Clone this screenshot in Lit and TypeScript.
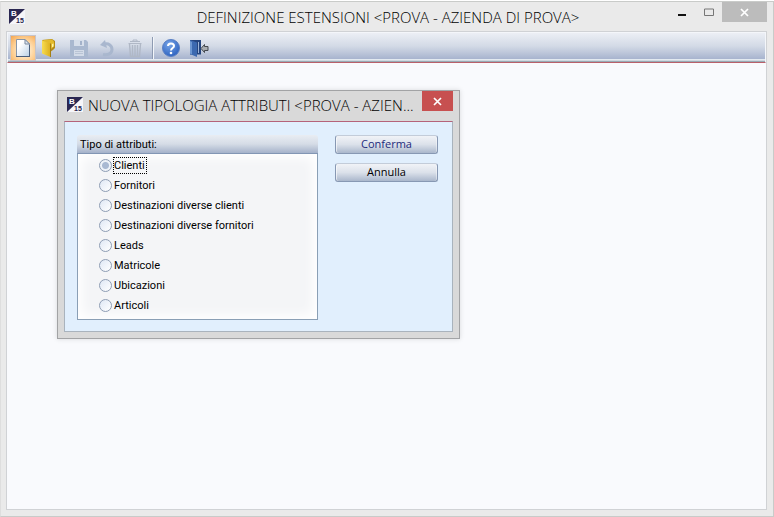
import { LitElement, html, svg, css } from "lit";
import { customElement, property, state } from "lit/decorators.js";

@customElement("app-logo")
class AppLogo extends LitElement {
  static styles = css`
    :host { display: block; width: 16px; height: 16px; }
    svg { display: block; }
    .letter { font: bold 8px "Liberation Sans", Arial, sans-serif; fill: #fff; }
    .number { font: bold 7px "Liberation Sans", Arial, sans-serif; fill: #26244c; }
  `;
  render() {
    return html`<svg width="16" height="16" viewBox="0 0 16 16" aria-hidden="true">
      <rect width="16" height="15" fill="#f6f6fa" />
      <path d="M0 0H16L0 15Z" fill="#2a2752" />
      <text class="letter" x="2" y="7">B</text>
      <text class="number" x="7" y="14">15</text>
    </svg>`;
  }
}

const icons: Record<string, unknown> = {
  new: svg`
    <defs><linearGradient id="pg" x1="0" y1="0" x2="1" y2="1"><stop offset="0.3" stop-color="#fff"/><stop offset="1" stop-color="#b9d0e6"/></linearGradient></defs>
    <path d="M3.5 1.5H12L16.5 6V18.5H3.5Z" fill="url(#pg)" stroke="#8795a8"/>
    <path d="M12 1.5V6H16.5Z" fill="#dfe8f2" stroke="#7b899e" stroke-linejoin="round"/>
    <path d="M3 18.5H17M16.5 7V18" stroke="#4a5e7b"/>`,
  open: svg`
    <defs><linearGradient id="fg" x1="0" y1="0" x2="1" y2="0"><stop offset="0" stop-color="#f7dc50"/><stop offset="1" stop-color="#dcae1c"/></linearGradient></defs>
    <path d="M1 2L11 1L14 3V10L12 12L9 14Z" fill="#b48c18"/>
    <path d="M2 2L11 1.500L13 3.500V8L9 12Z" fill="#e3bb2c"/>
    <path d="M1 2.500L9.500 5.500V19L1 15.500Z" fill="url(#fg)"/>
    <path d="M9.500 5.500V19" stroke="#a57f14"/>
    <path d="M11 6L12.500 5.500V8.500L11 9.500Z" fill="#fff3a3"/>`,
  save: svg`
    <path d="M1 2H17L19 4V19H1Z" fill="#a9b8cf"/>
    <rect x="5" y="2" width="10" height="6" fill="#d6deea"/>
    <rect x="11" y="3" width="2" height="4" fill="#a3b2ca"/>
    <rect x="5" y="12" width="10" height="6" fill="#d3dbe8"/>
    <path d="M6 13.500H14M6 15.500H14" stroke="#b9c4d5"/>`,
  undo: svg`
    <path d="M7 6.500C11 4.500 15 7.500 15 11.500C15 15.500 11 17.500 6 16.500" fill="none" stroke="#a9b7ce" stroke-width="3"/>
    <path d="M3 7L8 2L10 10Z" fill="#a9b7ce"/>`,
  trash: svg`
    <g fill="none" stroke="#b0b8c6">
    <path d="M3.500 5.500H16.500M5 3.500H15M8 3.500V2H12V3.500"/>
    <path d="M4.500 6L5.500 18.500H14.500L15.500 6M7.500 7V18M10 7V18M12.500 7V18" stroke-width="1.400"/></g>`,
  help: svg`
    <defs><radialGradient id="hg" cx=".4" cy=".3" r=".8"><stop offset="0" stop-color="#78a5e8"/><stop offset="1" stop-color="#245abb"/></radialGradient></defs>
    <circle cx="10" cy="10" r="8.500" fill="url(#hg)" stroke="#5b80c4"/>
    <path d="M7 8C7 4.500 13 4.500 13 8C13 10 10 10 10 12.500" fill="none" stroke="#fff" stroke-width="2"/>
    <circle cx="10" cy="15" r="1.300" fill="#fff"/>`,
  exit: svg`
    <path d="M1 2H12V16.500H1Z" fill="#25457f"/>
    <rect x="9" y="4" width="1" height="11" fill="#9db3d6"/>
    <path d="M1 2L8 4.500V19L1 16Z" fill="#3c69b0"/>
    <path d="M1 3L3 4V16.500L1 15.500Z" fill="#6d97d2"/>
    <path d="M12 10.500L15.500 6.500V8.500H19V12.500H15.500V14.500Z" fill="#a9adb1" stroke="#44494f"/>`,
};

@customElement("tool-button")
class ToolButton extends LitElement {
  @property() icon = "new";
  @property() label = "";
  @property({ type: Boolean }) active = false;
  @property({ type: Boolean }) disabled = false;
  static styles = css`
    button {
      display: grid; place-items: center; box-sizing: border-box;
      width: 26px; height: 26px; margin: 0; padding: 0;
      border: 1px solid transparent; background: none;
    }
    .active {
      border-color: #c6c4ca;
      background: radial-gradient(circle at 55% 60%, #fff0d6 15%, #fdce91 60%, #f4a54f);
    }
    svg { display: block; }
  `;
  render() {
    return html`<button class=${this.active ? "active" : ""} ?disabled=${this.disabled} aria-label=${this.label}>
      <svg width="20" height="20" viewBox="0 0 20 20">${icons[this.icon]}</svg>
    </button>`;
  }
}

@customElement("attribute-dialog")
class AttributeDialog extends LitElement {
  @state() selected = "Clienti";
  private kinds = ["Clienti", "Fornitori", "Destinazioni diverse clienti", "Destinazioni diverse fornitori", "Leads", "Matricole", "Ubicazioni", "Articoli"];

  static styles = css`
    :host {
      display: block; box-sizing: border-box; width: 403px; max-width: 100%;
      padding: 0 6px 6px; border: 1px solid #a2a3a5; background: #d9d9d9;
      box-shadow: 0 0 5px #0002;
      font: 11px/14px Roboto, Tahoma, sans-serif; color: #000;
    }
    header { display: flex; align-items: center; box-sizing: border-box; height: 30px; padding: 0 0 2px 3px; }
    h2 {
      flex: 1; min-width: 0; margin: 0 0 0 5px; white-space: nowrap;
      font: 300 15px/20px "Open Sans", "Segoe UI", sans-serif; color: #000;
    }
    .close {
      display: grid; place-items: center; align-self: flex-start;
      width: 31px; height: 20px; padding: 0; border: 0; background: #c75050;
    }
    .client {
      display: flex; align-items: flex-start; gap: 17px;
      padding: 13px 14px 11px 12px; border: 1px solid #a9b3bd; border-top-color: #b5637a; background: #e1effd;
    }
    fieldset { flex: 1; min-width: 0; margin: 0; padding: 0; border: 0; }
    legend {
      float: left; box-sizing: border-box; width: 100%; height: 19px; padding: 0 3px; line-height: 20px;
      border-bottom: 1px solid #8296b4; border-radius: 3px 3px 0 0;
      background: linear-gradient(#e9edf3, #d5dce6 50%, #a5b2ca);
    }
    .choices {
      clear: both; display: flex; flex-direction: column; padding: 1px 0 4px 21px;
      border: 1px solid #8a9fb5; border-top: 0;
      background: #f4f5f7; box-shadow: inset 0 0 12px 4px #fff;
    }
    .choice { display: flex; align-items: center; gap: 1px; height: 20px; }
    .choice span { padding: 1px 1px 0 0; border: 1px solid transparent; }
    .choice .focus { border: 1px dotted #000; }
    input {
      appearance: none; box-sizing: border-box; width: 13px; height: 13px; margin: 0;
      border: 1px solid #8e9db4; border-radius: 50%;
      background: linear-gradient(135deg, #dfe8f5, #fff);
    }
    input:checked { background: radial-gradient(circle, #a9b9d2 0 3px, #eef2f8 4px); }
    .actions { display: flex; flex-direction: column; gap: 9px; width: 103px; }
    .action {
      height: 19px; padding: 0 0 2px; font: 11px/14px "Open Sans", "Segoe UI", sans-serif; color: #000;
      border: 1px solid #8798b3; border-top-color: #c3ccd9; border-radius: 3px;
      background: linear-gradient(#f1f3f7, #dbe1ea 50%, #aab7cc);
      box-shadow: inset 1px 0 #ffffff99, inset -1px 0 #ffffff66;
    }
    .primary { color: #1d2c7c; }
  `;
  render() {
    return html`
      <header>
        <app-logo></app-logo>
        <h2>NUOVA TIPOLOGIA ATTRIBUTI &lt;PROVA - AZIEN...</h2>
        <button class="close" aria-label="Chiudi">
          <svg width="9" height="9" viewBox="0 0 9 9"><path d="M1 1L8 8M8 1L1 8" stroke="#fff" stroke-width="1.700" /></svg>
        </button>
      </header>
      <div class="client">
        <fieldset>
          <legend>Tipo di attributi:</legend>
          <div class="choices">
            ${this.kinds.map((kind) => html`<label class="choice">
              <input type="radio" name="kind" .checked=${kind === this.selected} @change=${() => (this.selected = kind)} />
              <span class=${kind === this.selected ? "focus" : ""}>${kind}</span>
            </label>`)}
          </div>
        </fieldset>
        <div class="actions">
          <button class="action primary">Conferma</button>
          <button class="action">Annulla</button>
        </div>
      </div>`;
  }
}

@customElement("app-root")
class AppRoot extends LitElement {
  static styles = css`
    :host {
      display: flex; flex-direction: column; box-sizing: border-box; min-height: 100vh;
      padding: 1px 0 0; background: #fff;
    }
    .window {
      flex: 1; display: flex; flex-direction: column; padding: 0 6px 6px 5px;
      border: 1px solid #c9cbc9; border-left-color: #dedede; background: #eaeaea;
    }
    .titlebar { display: grid; grid-template-columns: 1fr auto 1fr; align-items: center; height: 29px; padding-left: 3px; }
    h1 { margin: 0; font: 300 15px/20px "Open Sans", "Segoe UI", sans-serif; color: #000; white-space: nowrap; }
    .controls { display: flex; justify-content: flex-end; align-self: flex-start; }
    .control { display: grid; place-items: center; width: 27px; height: 20px; padding: 0; border: 0; background: none; }
    .close { width: 45px; background: #bcbcbc; }
    .client { flex: 1; display: flex; flex-direction: column; border: 1px solid #d0d2d5; background: #f9fafd; }
    .toolbar {
      display: flex; align-items: center; gap: 2px; box-sizing: border-box; height: 31px; padding: 0 2px;
      border: solid #f4f6fa; border-width: 1px 1px 0; border-bottom: 1px solid #b9606a;
      background: linear-gradient(#eceff5, #d3dae6 45%, #a9b5cf 88%, #e3eaf0 90%, #e3eaf0 94%, #98a9b4 97%);
    }
    .divider { width: 1px; height: 22px; margin: 0 2px; background: #8e9bb2; border-right: 1px solid #f3f6fa; }
    main { flex: 1; padding: 27px 50px; }
  `;
  render() {
    return html`<div class="window">
      <div class="titlebar">
        <app-logo></app-logo>
        <h1>DEFINIZIONE ESTENSIONI &lt;PROVA - AZIENDA DI PROVA&gt;</h1>
        <div class="controls">
          <button class="control" aria-label="Riduci a icona"><svg width="10" height="10"><path d="M1 8H9" stroke="#111" stroke-width="2" /></svg></button>
          <button class="control" aria-label="Ingrandisci"><svg width="10" height="8"><path d="M.5 1H9.500V7.500H.5Z" fill="none" stroke="#777" /></svg></button>
          <button class="control close" aria-label="Chiudi"><svg width="9" height="9"><path d="M1 1L8 8M8 1L1 8" stroke="#fff" stroke-width="1.700" /></svg></button>
        </div>
      </div>
      <div class="client">
        <div class="toolbar">
          <tool-button icon="new" label="Nuovo" active></tool-button>
          <tool-button icon="open" label="Apri"></tool-button>
          <tool-button icon="save" label="Salva" disabled></tool-button>
          <tool-button icon="undo" label="Annulla" disabled></tool-button>
          <tool-button icon="trash" label="Elimina" disabled></tool-button>
          <div class="divider"></div>
          <tool-button icon="help" label="Aiuto"></tool-button>
          <tool-button icon="exit" label="Esci"></tool-button>
        </div>
        <main><attribute-dialog></attribute-dialog></main>
      </div>
    </div>`;
  }
}
